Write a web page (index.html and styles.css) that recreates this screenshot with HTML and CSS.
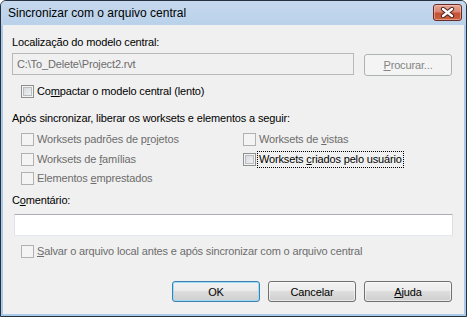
FILE: index.html
```html
<!DOCTYPE html>
<html lang="pt">
<head>
    <meta charset="UTF-8">
    <title>Sincronizar com o arquivo central</title>
    <link rel="stylesheet" href="styles.css">
</head>
<body>
    <div class="window">
        <div class="titlebar">
            <span class="title">Sincronizar com o arquivo central</span>
            <span class="close">
                <svg width="15" height="11" viewBox="0 0 15 11">
                    <path d="M3 2 L12 9 M12 2 L3 9" stroke="#4a1f1a" stroke-width="4.2" stroke-linecap="round"/>
                    <path d="M3 2 L12 9 M12 2 L3 9" stroke="#ffffff" stroke-width="2.4" stroke-linecap="round"/>
                </svg>
            </span>
        </div>

        <div class="client">
            <div class="label">Localização do modelo central:</div>

            <div class="path-row">
                <div class="field disabled">C:\To_Delete\Project2.rvt</div>
                <button class="btn" disabled><u>P</u>rocurar...</button>
            </div>

            <div class="check compact">
                <span class="box"></span>
                <span class="text">Co<u>m</u>pactar o modelo central (lento)</span>
            </div>

            <div class="label section">Após sincronizar, liberar os worksets e elementos a seguir:</div>

            <div class="options">
                <div class="check disabled"><span class="box"></span><span class="text">Worksets padrões de p<u>r</u>ojetos</span></div>
                <div class="check disabled"><span class="box"></span><span class="text">Worksets de <u>v</u>istas</span></div>
                <div class="check disabled"><span class="box"></span><span class="text">Worksets de <u>f</u>amílias</span></div>
                <div class="check"><span class="box"></span><span class="text focused">Worksets <u>c</u>riados pelo usuário</span></div>
                <div class="check disabled"><span class="box"></span><span class="text">Elementos <u>e</u>mprestados</span></div>
            </div>

            <div class="label comment-label">C<u>o</u>mentário:</div>
            <div class="field comment"></div>

            <div class="check disabled save">
                <span class="box"></span>
                <span class="text"><u>S</u>alvar o arquivo local antes e após sincronizar com o arquivo central</span>
            </div>

            <div class="buttons">
                <button class="btn default">OK</button>
                <button class="btn">Cancelar</button>
                <button class="btn"><u>A</u>juda</button>
            </div>
        </div>
    </div>
</body>
</html>
```

FILE: styles.css
```css
html, body {
    margin: 0;
    padding: 0;
    background: #ffffff;
}

body {
    font-family: "Liberation Sans", Arial, sans-serif;
    font-size: 11px;
    letter-spacing: -0.15px;
    color: #000000;
}

.window {
    width: 465px;
    height: 315px;
    border: 1px solid #26313f;
    border-radius: 6px 6px 0 0;
    background: #a9cbe9;
    display: flex;
    flex-direction: column;
}

.titlebar {
    height: 24px;
    display: flex;
    align-items: center;
    justify-content: space-between;
    padding: 0 4px 0 7px;
    background: linear-gradient(#c6d9ee, #b9d1ea);
    border-radius: 5px 5px 0 0;
}

.title {
    font-size: 12px;
    letter-spacing: 0;
    color: #000000;
}

.close {
    width: 27px;
    height: 15px;
    margin-top: -2px;
    border: 1px solid #6b2a23;
    border-radius: 3px;
    background: linear-gradient(#e3a796 0%, #d98871 45%, #c75036 55%, #c9623f 100%);
    box-shadow: inset 0 0 0 1px rgba(255, 220, 210, 0.45);
    display: flex;
    align-items: center;
    justify-content: center;
}

.client {
    flex: 1;
    margin: 0 2px 2px 2px;
    background: #f0f0f0;
    padding: 11px 12px 0 9px;
    display: flex;
    flex-direction: column;
}

.label {
    line-height: 13px;
    height: 13px;
}

.path-row {
    display: flex;
    align-items: flex-start;
    margin-top: 4px;
    height: 23px;
}

.field {
    height: 20px;
    border: 1px solid #abadb3;
    box-sizing: content-box;
    line-height: 20px;
    padding: 0 4px;
}

.field.disabled {
    width: 332px;
    border-color: #b8b8b8;
    background: #f0f0f0;
    color: #6d6d6d;
}

.btn {
    font-family: inherit;
    font-size: 11px;
    letter-spacing: inherit;
    width: 88px;
    height: 21px;
    padding: 0;
    border: 1px solid #707070;
    border-radius: 3px;
    background: linear-gradient(#f2f2f2 0%, #ebebeb 50%, #dddddd 50%, #cfcfcf 100%);
    box-shadow: inset 0 0 0 1px rgba(255, 255, 255, 0.55);
    color: #000000;
}

.path-row .btn {
    margin-left: 10px;
    margin-top: 1px;
    height: 22px;
}

.btn:disabled {
    border-color: #adb2b5;
    background: #f4f4f4;
    box-shadow: none;
    color: #838383;
}

.btn.default {
    border-color: #3c7fb1;
    box-shadow: inset 0 0 0 1px #9fdcf3;
}

.check {
    display: flex;
    align-items: center;
    height: 13px;
    line-height: 13px;
}

.box {
    width: 11px;
    height: 11px;
    border: 1px solid #8e8f8f;
    margin-right: 3px;
    background: linear-gradient(135deg, #cfd3d8, #f7f8f9);
    box-shadow: inset 0 0 0 1px #f4f4f4, inset 0 0 0 2px #b9bdc2;
    flex-shrink: 0;
}

.check.disabled .box {
    border-color: #b1b1b1;
    background: #f4f4f4;
    box-shadow: none;
}

.check.disabled .text {
    color: #6d6d6d;
}

.compact {
    margin-top: 9px;
    margin-left: 9px;
}

.section {
    margin-top: 14px;
}

.options {
    display: grid;
    grid-template-columns: 222px 1fr;
    row-gap: 6.5px;
    margin-top: 8px;
    margin-left: 9px;
}

.focused {
    outline: 1px dotted #000000;
    outline-offset: 1px;
}

.comment-label {
    margin-top: 9px;
}

.field.comment {
    margin-top: 7px;
    margin-left: 2px;
    margin-right: -1px;
    background: #ffffff;
    border-color: #abadb3 #dbdfe6 #e3e9ef #e2e3ea;
}

.save {
    margin-top: 9px;
    margin-left: 9px;
}

.buttons {
    display: flex;
    justify-content: flex-end;
    gap: 8px;
    margin-top: 23px;
}
```
